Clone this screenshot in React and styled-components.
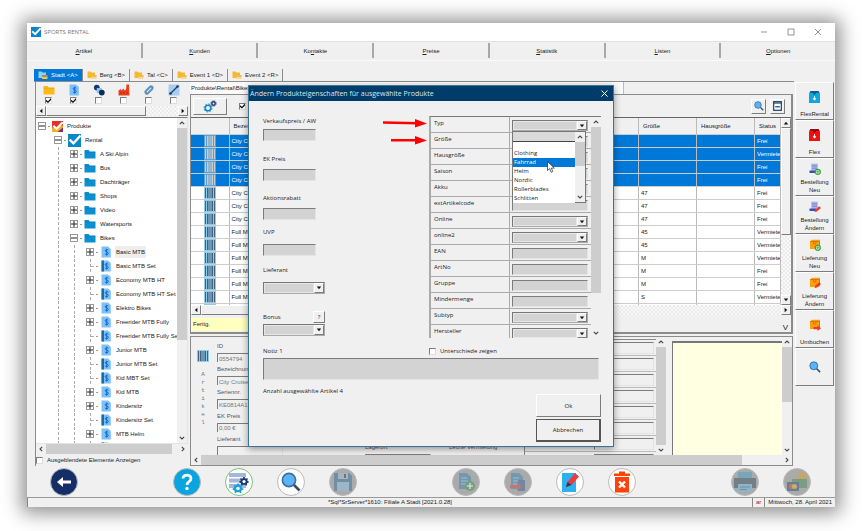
import React, { useState } from 'react';
import styled, { createGlobalStyle, css } from 'styled-components';

const GlobalStyle = createGlobalStyle`
  * {
    box-sizing: border-box;
  }

  body {
    margin: 0;
    background: white;
    color: #222;
    font-family: 'Liberation Sans', sans-serif;
    font-size: 6px;
    line-height: 8px;
  }

  button, input, select, textarea {
    margin: 0;
    padding: 0;
    border: 0;
    border-radius: 0;
    color: inherit;
    font: inherit;
  }

  svg {
    display: block;
    flex: none;
  }
`;

const sunken = css`
  border: 1px solid;
  border-color: #7d7d7d #e4e4e4 #e4e4e4 #7d7d7d;
`;

const raised = css`
  border: 1px solid;
  border-color: #fff #7d7d7d #7d7d7d #fff;
  background: #f0f0f0;
`;

const Page = styled.div`
  padding: 23px 29px 24px 27px;
`;

const AppWindow = styled.div`
  position: relative;
  background: #f0f0f0;
  box-shadow: 0 1px 18px 5px rgba(0, 0, 0, 0.45);
`;

/* ---------- title bar, menu, tabs ---------- */

const TitleBar = styled.header`
  display: flex;
  align-items: center;
  gap: 3px;
  height: 18px;
  padding: 0 9px 0 4px;
  background: white;
`;

const AppTitle = styled.h1`
  flex: 1;
  margin: 0;
  color: #777;
  font: 400 6px/10px 'Open Sans', sans-serif;
`;

const WindowButton = styled.button`
  width: 12px;
  margin-left: 12px;
  background: none;
  color: #888;
`;

const Menu = styled.nav`
  display: flex;
  height: 20px;
  padding: 1px 0 2px;
  border-top: 1px solid #e2e2e2;
  border-bottom: 1px solid #fafafa;
`;

const MenuButton = styled.button`
  flex: 1;
  border-right: 2px solid #a8a8a8;
  background: none;
  text-align: center;

  &:last-child {
    border-right: 0;
  }
`;

const Tabs = styled.div`
  display: flex;
  align-items: flex-end;
  height: 21px;
  margin: 0 41px 0 7px;
  border-bottom: 1px solid #8c8c8c;
`;

const Tab = styled.button`
  display: flex;
  align-items: center;
  gap: 3px;
  height: 12px;
  padding: 0 4px;
  border-right: 1px solid #8c8c8c;
  background: ${props => props.$active ? '#0078d7' : 'none'};
  color: ${props => props.$active ? 'white' : '#222'};
`;

/* ---------- shared controls ---------- */

const Checkbox = styled.input.attrs({ type: 'checkbox' })`
  appearance: none;
  flex: none;
  width: 7px;
  height: 7px;
  border: 1px solid;
  border-color: #7d7d7d #ddd #ddd #7d7d7d;
  background: white;

  &:checked::after {
    content: '';
    display: block;
    width: 5px;
    height: 5px;
    background: #111;
    clip-path: polygon(0 35%, 40% 65%, 100% 0, 100% 40%, 40% 100%, 0 70%);
  }
`;

const Bar = styled.div`
  display: flex;
  flex: none;
  flex-direction: ${props => props.$vertical ? 'column' : 'row'};
  ${props => props.$vertical ? 'width: 10px;' : 'height: 10px;'}
  background: ${props => props.$classic
    ? 'repeating-conic-gradient(#ececec 0 25%, #f8f8f8 0 50%) 0 0 / 4px 4px'
    : '#f0f0f0'};
`;

const BarArrow = styled.button`
  display: flex;
  flex: none;
  align-items: center;
  justify-content: center;
  width: 10px;
  height: 10px;
  background: none;
  color: #444;
  ${props => props.$classic && raised}
`;

const BarThumb = styled.div`
  flex: ${props => props.$size} 1 0;
  background: #cdcdcd;
  ${props => props.$classic && raised}
`;

const BarRest = styled.div`
  flex: ${props => props.$size} 1 0;
`;

const turns = { up: 0, right: 90, down: 180, left: 270 };

const Arrow = ({ to, solid }) => (
  <svg width="6" height="6" viewBox="0 0 6 6">
    <g transform={`rotate(${turns[to]} 3 3)`}>
      {solid
        ? <path d="M0.8 4.4 3 1.8 5.2 4.4Z" fill="#111" />
        : <path d="M0.8 4.2 3 2 5.2 4.2" fill="none" stroke="currentColor" strokeWidth="1.1" />}
    </g>
  </svg>
);

const ScrollBar = ({ vertical, classic, thumb, rest }) => (
  <Bar $vertical={vertical} $classic={classic}>
    <BarArrow $classic={classic} aria-label="Zurück">
      <Arrow to={vertical ? 'up' : 'left'} solid={classic} />
    </BarArrow>
    <BarThumb $size={thumb} $classic={classic} />
    <BarRest $size={rest} />
    <BarArrow $classic={classic} aria-label="Weiter">
      <Arrow to={vertical ? 'down' : 'right'} solid={classic} />
    </BarArrow>
  </Bar>
);

/* ---------- icons ---------- */

const LogoIcon = ({ size = 10, red }) => (
  <svg width={size} height={size} viewBox="0 0 12 12">
    <rect width="12" height="12" fill={red ? '#e3312d' : '#0a86c9'} />
    {red && <path d="M0 7 12 5V12H0Z" fill="#f5b324" />}
    {red && <path d="M6 12 12 7V12Z" fill="#7b2b83" />}
    <path d="M1.5 5.2 5 8.6 11.6 1.4" fill="none" stroke="white" strokeWidth="2.2" />
  </svg>
);

const FolderIcon = ({ color = '#0a8fd0', size = 12 }) => (
  <svg width={size} height={size} viewBox="0 0 12 12">
    <path d="M0.5 2H4.6L5.8 3.4H11.5V10.6H0.5Z" fill={color} />
    <path d="M0.5 4.2H11.5" stroke="rgba(0,0,0,0.15)" strokeWidth="0.6" />
  </svg>
);

const TabIcon = ({ active }) => (
  <svg width="10" height="10" viewBox="0 0 10 10">
    <path d="M0.5 1.5H3.5L4.5 2.6H8V8H0.5Z" fill={active ? '#8fd0f0' : '#f7b92c'} />
    <rect x="4" y="5" width="5.5" height="4" fill={active ? '#f3c64e' : '#fbd98a'} />
    <path d="M4 6H9.5" stroke={active ? '#264a77' : '#d98b14'} strokeWidth="0.8" />
  </svg>
);

const DocIcon = ({ set, size = 12 }) => (
  <svg width={size} height={size} viewBox="0 0 12 12">
    <path d="M1.5 0.5H8L10.8 3V11.5H1.5Z" fill="#7cc0f7" />
    {set && <path d="M1.5 0.5H4V11.5H1.5Z" fill="#1b6c9f" />}
    <path
      d="M8.3 4.3C7.8 3.3 5 3.4 5.2 4.9C5.4 6.2 8.3 5.9 8.3 7.5C8.2 9 5.4 9 4.9 7.8M6.7 2.7V9.6"
      fill="none"
      stroke="#0b62c4"
      strokeWidth="0.9"
    />
  </svg>
);

const BarcodeIcon = ({ light }) => (
  <svg width="12" height="12" viewBox="0 0 12 12">
    <rect width="12" height="12" fill={light ? '#5f9fd0' : '#8fcbe6'} />
    <path
      d="M1.5 1V11M3.5 1V11M5 1V11M7 1V11M8.5 1V11M10.5 1V11"
      stroke={light ? '#d4d4cf' : '#3b5672'}
      strokeWidth="0.9"
    />
  </svg>
);

const gear = 'M-0.9-5H0.9L1.3-3.5 2.6-2.9 3.9-3.7 5-2.5 4.1-1.2 4.5 0 6 0.5V2L4.3 2.4 3.5 3.6 4 5 2.6 5.8 1.5 4.7H-1.5L-2.6 5.8-4 5-3.5 3.6-4.3 2.4-6 2V0.5L-4.5 0-4.1-1.2-5-2.5-3.9-3.7-2.6-2.9-1.3-3.5Z';

const GearsIcon = () => (
  <svg width="14" height="13" viewBox="0 0 14 13">
    <circle cx="5" cy="8" r="2.8" fill="none" stroke="#1686c4" strokeWidth="1.6" />
    <circle cx="5" cy="8" r="4" fill="none" stroke="#1686c4" strokeWidth="1" strokeDasharray="1.6 1.5" />
    <circle cx="10.5" cy="3.5" r="1.7" fill="none" stroke="#1d3f74" strokeWidth="1.5" />
    <circle cx="10.5" cy="3.5" r="2.7" fill="none" stroke="#1d3f74" strokeWidth="0.9" strokeDasharray="1.2 0.9" />
  </svg>
);

const CirclesIcon = () => (
  <svg width="12" height="12" viewBox="0 0 12 12">
    <circle cx="3.8" cy="3.6" r="2.9" fill="#123a78" />
    <rect x="3.8" y="4" width="5" height="5" fill="#8cc3ee" />
    <circle cx="8.8" cy="8.6" r="2.9" fill="#0c2c5c" />
  </svg>
);

const FactoryIcon = () => (
  <svg width="12" height="12" viewBox="0 0 12 12">
    <path d="M0.5 11.5V6.5L3 5V6.5L6 4.5V6.5L8 5.5 8.5 0.5H11L11.5 11.5Z" fill="#e8401c" />
    <path d="M2 9H4M5 9H7M8.5 9H10" stroke="#b52c12" />
  </svg>
);

const LinkIcon = () => (
  <svg width="12" height="12" viewBox="0 0 12 12">
    <g transform="rotate(-45 6 6)">
      <rect x="0.5" y="3.5" width="11" height="5" rx="2.5" fill="#5d93bd" />
      <path d="M3 6H9" stroke="#d7e7f3" strokeWidth="1.2" />
    </g>
  </svg>
);

const LineIcon = () => (
  <svg width="12" height="12" viewBox="0 0 12 12">
    <rect x="0.5" y="0.5" width="11" height="11" fill="#a9cdea" />
    <path d="M2 10 10 2" stroke="#1d3f74" strokeWidth="1.2" />
    <circle cx="2.5" cy="9.5" r="1.3" fill="#1d3f74" />
    <circle cx="9.5" cy="2.5" r="1.3" fill="#1d3f74" />
  </svg>
);

const SearchIcon = ({ size = 10 }) => (
  <svg width={size} height={size} viewBox="0 0 20 20">
    <path d="M12.5 12.5 18.5 18.5" stroke="#3d4b5c" strokeWidth="2.6" />
    <circle cx="8" cy="8" r="6.6" fill="#5bb4f7" stroke="#3a6f9f" strokeWidth="1.6" />
  </svg>
);

const CollapseIcon = () => (
  <svg width="9" height="10" viewBox="0 0 9 10">
    <rect x="0.7" y="0.7" width="7.6" height="8.6" fill="white" stroke="#17406e" strokeWidth="1.2" />
    <path d="M0.7 2H8.3" stroke="#17406e" strokeWidth="1.2" />
    <path d="M2.2 5.8H6.8" stroke="#17406e" strokeWidth="1.2" />
  </svg>
);

const BoxDownIcon = ({ color, top }) => (
  <svg width="11" height="12" viewBox="0 0 11 12">
    <path d="M1.5 0H9.5L11 2.5V12H0V2.5Z" fill={color} />
    <path d="M1.5 0H9.5L10.5 1.8H7.5L5.5 4 3.5 1.8H0.5Z" fill={top} />
    <path d="M5.5 5V8M4.3 7.4 5.5 9.2 6.7 7.4Z" stroke="white" strokeWidth="0.9" fill="white" />
  </svg>
);

const marks = {
  plus: (
    <g>
      <circle cx="8.8" cy="8.8" r="2.5" fill="white" stroke="#3aa53f" strokeWidth="1.3" />
      <path d="M8.8 7.3V10.3M7.3 8.8H10.3" stroke="#3aa53f" strokeWidth="0.9" />
    </g>
  ),
  pen: <path d="M5.5 11 6.2 8.8 10 5.2 12 7 8 10.6Z" fill="#ee3b24" />,
  move: <path d="M4.5 8H8.5V6.2L12 9.2 8.5 12V10.2H4.5Z" fill="#ee3b24" />,
};

const OrderIcon = ({ mark }) => (
  <svg width="12" height="12" viewBox="0 0 12 12">
    <path d="M2 0.5H9V9H2Z" fill="#b8c4ee" />
    <path d="M3 2.3H8M3 4H8M3 5.7H8" stroke="#6578c8" strokeWidth="0.8" />
    <path d="M0.5 7.5H7V10H0.5Z" fill="#3a4fb0" />
    {marks[mark]}
  </svg>
);

const DeliveryIcon = ({ mark }) => (
  <svg width="12" height="12" viewBox="0 0 12 12">
    <path d="M1 2.5 3 0.8H11L9.8 2.5V10H1Z" fill="#ff9d0a" />
    <path d="M9.8 2.5 11 0.8V8.5L9.8 10Z" fill="#d97706" />
    <path d="M1 2.5H9.8M4.5 2.5V5H6.8V2.5" fill="none" stroke="#c96a00" strokeWidth="0.7" />
    {marks[mark]}
  </svg>
);

/* ---------- tree pane ---------- */

const Content = styled.main`
  display: flex;
  padding: 0 1px 0 8px;
`;

const TreePane = styled.aside`
  flex: none;
  width: 153px;
  border-left: 1px solid #8c8c8c;
`;

const FilterRow = styled.div`
  display: grid;
  grid-template-columns: repeat(6, 25px);
  height: 24px;
  padding-top: 2px;
`;

const Filter = styled.label`
  display: flex;
  flex-direction: column;
  align-items: center;
  gap: 1px;
`;

const TreeBox = styled.div`
  display: flex;
  height: 327px;
  margin-top: 1px;
  ${sunken}
  border-left: 0;
  background: white;
`;

const TreeList = styled.ul`
  flex: 1;
  margin: 0;
  padding: 1px 0 0 2px;
  overflow: hidden;
  list-style: none;
`;

const TreeItem = styled.li`
  display: flex;
  align-items: center;
  height: 14px;
  white-space: nowrap;
`;

const Guide = styled.span`
  flex: none;
  width: 16px;
  height: 14px;
  background: ${props => props.$line
    ? 'repeating-linear-gradient(#aaa 0 3px, transparent 3px 5px) 4px 0 / 1px 14px no-repeat'
    : 'none'};
`;

const Expander = styled.button`
  display: flex;
  flex: none;
  align-items: center;
  justify-content: center;
  width: 8px;
  height: 8px;
  border: 1px solid #999;
  background: white;
`;

const NoExpander = styled.span`
  flex: none;
  width: 8px;
  height: 14px;
  background:
    repeating-linear-gradient(#aaa 0 3px, transparent 3px 5px) 4px 0 / 1px 14px no-repeat,
    linear-gradient(#aaa, #aaa) 5px 7px / 3px 1px no-repeat;
`;

const Dash = styled.span`
  flex: none;
  width: 2px;
  height: 1px;
  margin: 0 2px;
  background: #999;
`;

const TreeLabel = styled.span`
  margin-left: 3px;
  padding: 2px 1px;
  background: ${props => props.$selected ? '#eee' : 'none'};
`;

const CheckLabel = styled.label`
  display: flex;
  align-items: center;
  gap: 4px;
  height: ${props => props.$height || 10}px;
`;

/* ---------- list pane ---------- */

const Center = styled.div`
  flex: 1;
  min-width: 0;
  margin-left: 2px;
`;

const PathTab = styled.div`
  width: 72%;
  height: 12px;
  padding: 2px 1px;
  border-right: 1px solid #bbb;
  background: #fafafa;
`;

const ListPane = styled.section`
  border: 1px solid #8c8c8c;
  border-width: 1px 2px 2px 1px;
`;

const ListTools = styled.div`
  display: flex;
  align-items: center;
  gap: 4px;
  height: 22px;
  padding: 0 6px 0 2px;
`;

const ToolButton = styled.button`
  display: flex;
  align-items: center;
  justify-content: center;
  width: ${props => props.$width}px;
  height: ${props => props.$height}px;
  ${raised}
`;

const FilterToggle = styled.label`
  display: flex;
  flex: 1;
  padding-left: 8px;
`;

const Grid = styled.div`
  display: flex;
  height: 188px;
  border-top: 1px solid #666;
`;

const GridClip = styled.div`
  flex: 1;
  overflow: hidden;
`;

const Table = styled.table`
  width: 100%;
  height: 197px;
  border-collapse: collapse;
  table-layout: fixed;

  th, td {
    padding: 0 2px;
    border-right: 1px solid #bbb;
    border-bottom: 1px solid #ccc;
    overflow: hidden;
    font-weight: 400;
    text-align: left;
    white-space: nowrap;
  }

  th {
    height: 16px;
    padding: 0 4px;
  }

  tbody {
    background: white;
  }
`;

const Row = styled.tr`
  background: ${props => props.$selected ? '#0078d7' : 'white'};
  color: ${props => props.$selected ? 'white' : '#222'};

  td:first-child {
    padding-left: 13px;
  }
`;

const ReadyRow = styled.div`
  display: flex;
  align-items: flex-end;
  justify-content: space-between;
  height: 16px;
  margin-top: 1px;
  padding-right: 3px;
  font-size: 8px;
`;

const Ready = styled.output`
  width: 40%;
  height: 13px;
  margin-bottom: 1px;
  padding: 2px;
  background: #ffffc0;
  font-size: 6px;
`;

/* ---------- detail pane ---------- */

const DetailPane = styled.section`
  margin-top: 2px;
  border: 1px solid #8c8c8c;
`;

const DetailBody = styled.div`
  display: flex;
  height: 118px;
  overflow: hidden;
`;

const ArticleMark = styled.div`
  display: flex;
  flex-direction: column;
  align-items: center;
  width: 26px;
  padding: 13px 2px 0 0;
  color: #777;
  font: 6px/8px 'Liberation Mono', monospace;

  svg {
    margin-bottom: 9px;
  }
`;

const DetailFields = styled.div`
  display: flex;
  flex: ${props => props.$grow || 0} 0 ${props => props.$width}px;
  flex-direction: column;
  justify-content: ${props => props.$bottom ? 'flex-end' : 'flex-start'};
  gap: 3px;
  padding-top: 5px;
  color: #555;
`;

const DetailField = styled.label`
  display: flex;
  flex-direction: column;
  gap: 3px;
  height: ${props => props.$cut ? 12 : 22}px;
  overflow: hidden;
`;

const DetailInput = styled.input`
  flex: none;
  width: 66px;
  height: 11px;
  padding: 0 1px;
  ${sunken}
  background: #f0f0f0;
  color: #777;
`;

const MiniProps = styled.div`
  width: 132px;
  height: 116px;
  margin-top: 2px;
  overflow: hidden;
  border-top: 1px solid #8c8c8c;
  border-left: 1px solid #8c8c8c;
`;

const MiniProp = styled.label`
  display: grid;
  grid-template-columns: 65px 1fr;
  height: 16px;
  padding: 2px 2px 2px 4px;
  border-bottom: 1px solid #bbb;

  input {
    width: 100%;
    height: 12px;
    ${sunken}
    background: #f0f0f0;
  }
`;

const NoteBox = styled.textarea`
  width: 110px;
  margin: 4px 0 0 6px;
  border: 1px solid #777;
  border-width: 2px 0 0 1px;
  background: #ffffe1;
  resize: none;
`;

/* ---------- sidebar ---------- */

const Sidebar = styled.nav`
  width: 39px;
  margin-left: 2px;
`;

const SideButton = styled.button`
  display: flex;
  flex-direction: column;
  align-items: center;
  width: 100%;
  height: 38px;
  padding: 0 3px 1px;
  ${raised}
`;

const SideIcon = styled.span`
  display: flex;
  flex: 1;
  align-items: center;
`;

/* ---------- bottom toolbar and status ---------- */

const Toolbar = styled.div`
  display: flex;
  justify-content: space-between;
  padding: 2px 24px 1px 23px;
`;

const ToolGroup = styled.div`
  display: flex;
  gap: 24px;
`;

const RoundButton = styled.button`
  display: flex;
  align-items: center;
  justify-content: center;
  width: 28px;
  height: 28px;
  border: 1px solid ${props => props.$ring || '#bbb'};
  border-radius: 50%;
  background: ${props => props.$color || 'white'};

  &:disabled {
    background: #aaa;
  }

  &:disabled svg {
    opacity: 0.45;
  }
`;

const StatusBar = styled.footer`
  display: flex;
  height: 10px;
  border-top: 1px solid #999;
`;

const StatusCell = styled.div`
  flex: ${props => props.$grow || 'none'};
  padding: 0 3px;
  border-left: 1px solid #888;
  color: ${props => props.$red ? '#b01010' : '#222'};
  text-align: center;
`;

/* ---------- dialog ---------- */

const Dialog = styled.section`
  position: absolute;
  top: 62px;
  left: 221px;
  width: 366px;
  border: 1px solid #3f7396;
  background: #f0f0f0;
  box-shadow: 0 2px 7px rgba(0, 0, 0, 0.4);
  font-family: 'Open Sans', sans-serif;
`;

const DialogTitle = styled.div`
  display: flex;
  align-items: center;
  justify-content: space-between;
  height: 15px;
  padding: 0 5px 0 1px;
  background: #003c69;
  color: #dbe6ee;

  h2 {
    margin: 0;
    font-size: 7px;
    font-weight: 400;
  }

  button {
    background: none;
  }
`;

const DialogBody = styled.form`
  padding: 15px 12px 4px 14px;
`;

const DialogColumns = styled.div`
  display: flex;
  justify-content: space-between;
`;

const FieldColumn = styled.div`
  display: grid;
  grid-template-rows: 25px 40px 39px 36px 38px 42px;
  width: 62px;
`;

const Field = styled.div`
  display: flex;
  flex-direction: column;
  justify-content: flex-end;
  gap: ${props => props.$gap}px;
`;

const FieldHead = styled.div`
  display: flex;
  align-items: center;
  justify-content: space-between;
  height: 10px;
  white-space: nowrap;
`;

const GrayInput = styled.input`
  width: ${props => props.$full ? '100%' : '53px'};
  height: ${props => props.$full ? 11 : 12}px;
  ${sunken}
  background: #d3d3d3;
`;

const SelectFrame = styled.div`
  display: flex;
  height: ${props => props.$height || 12}px;
  border: 1px solid;
  border-color: #777 #aaa #aaa #777;
  background: #d3d3d3;
`;

const PlainSelect = styled.select`
  appearance: none;
  flex: 1;
  min-width: 0;
  border: 1px solid #e6e6e6;
  background: #d3d3d3;
`;

const SelectArrow = styled.span`
  display: flex;
  align-items: center;
  justify-content: center;
  width: 10px;
  ${raised}
`;

const SelectBox = ({ id, height }) => (
  <SelectFrame $height={height}>
    <PlainSelect id={id} />
    <SelectArrow><Arrow to="down" solid /></SelectArrow>
  </SelectFrame>
);

const PropsBox = styled.div`
  display: flex;
  width: 172px;
  height: 222px;
  overflow: hidden;
  border-top: 1px solid #777;
  border-left: 2px solid #aaa;
`;

const PropRows = styled.div`
  position: relative;
  flex: 1;
`;

const PropRow = styled.div`
  display: grid;
  grid-template-columns: 79px 1fr;
  height: 16px;
  border-bottom: 1px solid #aaa;
`;

const PropLabel = styled.label`
  padding: 2px 3px;
  border-right: 1px solid #aaa;
`;

const PropValue = styled.div`
  padding: 3px 3px 1px 2px;
`;

const DropDown = styled.div`
  position: absolute;
  top: 14px;
  left: 81px;
  display: flex;
  width: 74px;
  height: 72px;
  border: 1px solid #777;
  background: white;
`;

const OptionList = styled.ul`
  flex: 1;
  margin: 0;
  padding: 0;
  list-style: none;

  &::before {
    content: '';
    display: block;
    height: 9px;
    margin-bottom: 7px;
    border-bottom: 1px solid #444;
    background: #dadada;
  }
`;

const Option = styled.li`
  height: 9px;
  padding-left: 1px;
  background: ${props => props.$active ? '#0078d7' : 'white'};
  color: ${props => props.$active ? 'white' : '#222'};
  line-height: 9px;
`;

const Pointer = styled.svg`
  position: absolute;
  top: 44px;
  left: 116px;
`;

const Hints = styled.svg`
  position: absolute;
  top: 31px;
  left: 133px;
`;

const Notes = styled.textarea`
  display: block;
  width: 336px;
  max-width: 100%;
  height: 22px;
  margin: 2px 0 7px;
  ${sunken}
  background: #d3d3d3;
  resize: none;
`;

const NotesHead = styled.div`
  display: grid;
  grid-template-columns: 166px 1fr;
  align-items: center;
  height: 10px;
  margin-top: 8px;
`;

const DialogFoot = styled.div`
  display: flex;
  align-items: flex-start;
  justify-content: space-between;
`;

const DialogActions = styled.div`
  display: grid;
  gap: 2px;
  width: 65px;
  padding-top: 7px;
`;

const DialogButton = styled.button`
  height: 23px;
  ${raised}
  ${props => props.$focus && 'border: 1px solid #555; border-width: 1px 2px 2px 1px;'}
`;

const QuestionButton = styled.button`
  width: 12px;
  height: 12px;
  ${raised}
`;

/* ---------- data ---------- */

const menu = [['', 'A', 'rtikel'], ['', 'K', 'unden'], ['Ko', 'n', 'takte'], ['', 'P', 'reise'], ['', 'S', 'tatistik'], ['', 'L', 'isten'], ['', 'O', 'ptionen']];

const tabs = ['Stadt <A>', 'Berg <B>', 'Tal <C>', 'Event 1 <D>', 'Event 2 <R>'];

const filters = [
  ['Ordner', <FolderIcon color="#fbb917" />, true],
  ['Artikel', <DocIcon />, true],
  ['Gruppen', <CirclesIcon />, false],
  ['Hersteller', <FactoryIcon />, false],
  ['Verknüpfung', <LinkIcon />, false],
  ['Linie', <LineIcon />, false],
];

const tree = [
  [0, 'Produkte', 'root', '-'],
  [1, 'Rental', 'logo', '-'],
  [2, 'A Ski Alpin', 'folder', '+'],
  [2, 'Bus', 'folder', '+'],
  [2, 'Dachträger', 'folder', '+'],
  [2, 'Shops', 'folder', '+'],
  [2, 'Video', 'folder', '+'],
  [2, 'Watersports', 'folder', '+'],
  [2, 'Bikes', 'folder', '-'],
  [3, 'Basic MTB', 'doc', '+'],
  [3, 'Basic MTB Set', 'set'],
  [3, 'Economy MTB HT', 'doc', '+'],
  [3, 'Economy MTB HT Set', 'set'],
  [3, 'Elektro Bikes', 'doc', '+'],
  [3, 'Freerider MTB Fully', 'doc', '+'],
  [3, 'Freerider MTB Fully Set', 'set'],
  [3, 'Junior MTB', 'doc', '+'],
  [3, 'Junior MTB Set', 'set'],
  [3, 'Kid MBT Set', 'set'],
  [3, 'Kid MTB', 'doc', '+'],
  [3, 'Kindersitz', 'doc', '+'],
  [3, 'Kindersitz Set', 'set'],
  [3, 'MTB Helm', 'doc', '+'],
  [3, 'MTB Helm Set', 'set'],
];

const treeIcons = {
  root: <LogoIcon size={11} red />,
  logo: <LogoIcon size={13} />,
  folder: <FolderIcon />,
  doc: <DocIcon />,
  set: <DocIcon set />,
};

const articles = [
  ['City Cruiser', '', 'Frei'],
  ['City Cruiser', '', 'Vermietet'],
  ['City Cruiser', '', 'Frei'],
  ['City Cruiser', '', 'Frei'],
  ['City Cruiser', '47', 'Frei'],
  ['City Cruiser', '47', 'Frei'],
  ['City Cruiser', '47', 'Frei'],
  ['Full MTB', '45', 'Vermietet'],
  ['Full MTB', '45', 'Vermietet'],
  ['Full MTB', 'M', 'Vermietet'],
  ['Full MTB', 'M', 'Frei'],
  ['Full MTB', 'M', 'Frei'],
  ['Full MTB', 'S', 'Vermietet'],
  ['Full MTB', 'S', 'Vermietet'],
];

const sideActions = [
  [<BoxDownIcon color="#12a5dc" top="#0b5f8c" />, 'FlexRental'],
  [<BoxDownIcon color="#ee1111" top="#8f0c0c" />, 'Flex'],
  [<OrderIcon mark="plus" />, 'Bestellung Neu'],
  [<OrderIcon mark="pen" />, 'Bestellung Ändern'],
  [<DeliveryIcon mark="plus" />, 'Lieferung Neu'],
  [<DeliveryIcon mark="pen" />, 'Lieferung Ändern'],
  [<DeliveryIcon mark="move" />, 'Umbuchen'],
  [<SearchIcon size={12} />, ''],
];

const properties = [
  ['Typ', true], ['Größe'], ['Hausgröße'], ['Saison'], ['Akku'], ['extArtikelcode'], ['Online', true],
  ['online2', true], ['EAN'], ['ArtNo'], ['Gruppe'], ['Mindermenge'], ['Subtyp', true], ['Hersteller', true],
];

const types = ['Clothing', 'Fahrrad', 'Helm', 'Nordic', 'Rollerblades', 'Schlitten'];

const SaveGlyph = () => (
  <svg width="20" height="20" viewBox="0 0 20 20">
    <path d="M1 1H16L19 4V19H1Z" fill="#2a6f9e" />
    <rect x="5" y="1" width="10" height="6" fill="#9fc3da" />
    <rect x="11" y="2" width="2" height="4" fill="#234" />
    <rect x="4" y="10" width="12" height="9" fill="#8fc4e4" />
  </svg>
);

const PageGlyph = ({ children }) => (
  <svg width="20" height="20" viewBox="0 0 20 20">
    <path d="M3 1H11L15 5V17H3Z" fill="#2e86bd" />
    <path d="M5 6H11M5 9H12M5 12H12" stroke="#a6cbe2" />
    {children}
  </svg>
);

const ArticleTree = () => {
  const [selected, setSelected] = useState('Basic MTB');

  return (
    <TreeBox>
      <TreeList>
        {tree.map(([level, name, icon, sign]) => (
          <TreeItem key={name} onClick={() => setSelected(name)}>
            {Array.from({ length: level }, (_, i) => <Guide key={i} $line={i > 0} />)}
            {sign ? (
              <Expander aria-label={name}>
                <svg width="6" height="6" viewBox="0 0 6 6">
                  <path d={sign === '+' ? 'M0 3H6M3 0V6' : 'M0 3H6'} stroke="#222" />
                </svg>
              </Expander>
            ) : <NoExpander />}
            <Dash />
            {treeIcons[icon]}
            <TreeLabel $selected={selected === name}>{name}</TreeLabel>
          </TreeItem>
        ))}
      </TreeList>
      <ScrollBar vertical thumb={213} rest={93} />
    </TreeBox>
  );
};

const ArticleTable = () => (
  <Grid>
    <GridClip>
      <Table>
        <colgroup>
          <col style={{ width: 38 }} />
          <col />
          <col style={{ width: 58 }} />
          <col style={{ width: 58 }} />
          <col style={{ width: 26 }} />
        </colgroup>
        <thead>
          <tr>
            <th />
            <th>Bezeichnung</th>
            <th>Größe</th>
            <th>Hausgröße</th>
            <th>Status</th>
          </tr>
        </thead>
        <tbody>
          {articles.map(([name, size, status], i) => (
            <Row key={i} $selected={i < 4}>
              <td><BarcodeIcon light={i < 4} /></td>
              <td>{name}</td>
              <td>{size}</td>
              <td />
              <td>{status}</td>
            </Row>
          ))}
        </tbody>
      </Table>
    </GridClip>
    <ScrollBar vertical classic thumb={106} rest={61} />
  </Grid>
);

const Details = () => (
  <DetailPane>
    <DetailBody>
      <ArticleMark>
        <BarcodeIcon />
        {'Artikel'.split('').map((letter, i) => <span key={i}>{letter}</span>)}
      </ArticleMark>
      <DetailFields $width={148}>
        {[['ID', '0554794'], ['Bezeichnung', 'City Cruiser'], ['Seriennr.', 'KE0814A1'], ['EK Preis', '0,00 €'], ['Lieferant', '']].map(([label, value]) => (
          <DetailField key={label}>
            {label}
            <DetailInput readOnly value={value} />
          </DetailField>
        ))}
      </DetailFields>
      <DetailFields $width={84} $bottom>
        <DetailField $cut>Lagerort<DetailInput readOnly /></DetailField>
      </DetailFields>
      <DetailFields $width={74} $grow={1} $bottom>
        <DetailField $cut>Letzte Vermietung</DetailField>
      </DetailFields>
      <MiniProps>
        {['Typ', 'Größe', 'Hausgröße', 'Saison', 'Akku', 'Online', 'EAN', 'online2'].map(label => (
          <MiniProp key={label}>{label}<input readOnly /></MiniProp>
        ))}
      </MiniProps>
      <ScrollBar vertical thumb={200} rest={1} />
      <NoteBox aria-label="Bemerkung" />
      <ScrollBar vertical thumb={57} rest={45} />
    </DetailBody>
    <ScrollBar thumb={540} rest={40} />
  </DetailPane>
);

const ProductDialog = () => (
  <Dialog role="dialog" aria-labelledby="dialog-title">
    <DialogTitle>
      <h2 id="dialog-title">Ändern Produkteigenschaften für ausgewählte Produkte</h2>
      <button aria-label="Schließen">
        <svg width="7" height="7" viewBox="0 0 7 7">
          <path d="M0.5 0.5 6.5 6.5M6.5 0.5 0.5 6.5" stroke="white" />
        </svg>
      </button>
    </DialogTitle>
    <DialogBody onSubmit={(e) => e.preventDefault()}>
      <DialogColumns>
        <FieldColumn>
          {[['Verkaufspreis / AW', 3], ['EK Preis', 5], ['Aktionsrabatt', 5], ['UVP', 7]].map(([label, gap]) => (
            <Field key={label} $gap={gap}>
              <FieldHead><label htmlFor={label}>{label}</label></FieldHead>
              <GrayInput id={label} />
            </Field>
          ))}
          <Field $gap={7}>
            <FieldHead><label htmlFor="lieferant">Lieferant</label></FieldHead>
            <SelectBox id="lieferant" />
          </Field>
          <Field $gap={2}>
            <FieldHead>
              <label htmlFor="bonus">Bonus</label>
              <QuestionButton type="button">?</QuestionButton>
            </FieldHead>
            <SelectBox id="bonus" />
          </Field>
        </FieldColumn>
        <PropsBox>
          <PropRows>
            {properties.map(([label, select]) => (
              <PropRow key={label}>
                <PropLabel htmlFor={`prop-${label}`}>{label}</PropLabel>
                <PropValue>
                  {select
                    ? <SelectBox id={`prop-${label}`} height={11} />
                    : <GrayInput id={`prop-${label}`} $full />}
                </PropValue>
              </PropRow>
            ))}
            <DropDown>
              <OptionList role="listbox" aria-label="Typ">
                {types.map(type => (
                  <Option key={type} role="option" $active={type === 'Fahrrad'}>{type}</Option>
                ))}
              </OptionList>
              <ScrollBar vertical thumb={24} rest={26} />
            </DropDown>
            <Pointer width="8" height="12" viewBox="0 0 8 12">
              <path d="M0.5 0.5V9.5L2.7 7.6 4.2 11.3 5.8 10.6 4.3 7.1H7.3Z" fill="white" stroke="#222" strokeWidth="0.7" />
            </Pointer>
          </PropRows>
          <ScrollBar vertical thumb={167} rest={35} />
        </PropsBox>
      </DialogColumns>
      <Hints width="46" height="28" viewBox="0 0 46 28">
        <path d="M1 5.5 36 6.2M9 23.2H36" stroke="#f00" strokeWidth="2.4" />
        <path d="M33 2 45 6.400 33 10.500ZM33 19 45 23.400 33 27.500Z" fill="#f00" />
      </Hints>
      <NotesHead>
        <label htmlFor="notiz">Notiz 1</label>
        <CheckLabel><Checkbox />Unterschiede zeigen</CheckLabel>
      </NotesHead>
      <Notes id="notiz" />
      <DialogFoot>
        <span>Anzahl ausgewählte Artikel 4</span>
        <DialogActions>
          <DialogButton type="submit">Ok</DialogButton>
          <DialogButton type="button" $focus>Abbrechen</DialogButton>
        </DialogActions>
      </DialogFoot>
    </DialogBody>
  </Dialog>
);

const BottomTools = () => (
  <Toolbar>
    <ToolGroup>
      <RoundButton $color="#142f68" aria-label="Zurück">
        <svg width="16" height="14" viewBox="0 0 16 14">
          <path d="M1 7 7 2V5.500H15V8.500H7V12Z" fill="white" />
        </svg>
      </RoundButton>
    </ToolGroup>
    <ToolGroup>
      <RoundButton $color="#0aa5de" aria-label="Hilfe">
        <svg width="12" height="18" viewBox="0 0 12 18">
          <path d="M2 5.5C2 0.8 10 1 10 5.5C10 8.5 6 8.5 6 12" fill="none" stroke="white" strokeWidth="2.7" />
          <circle cx="6" cy="15.5" r="1.7" fill="white" />
        </svg>
      </RoundButton>
      <RoundButton $ring="#7cc47c" aria-label="Einstellungen">
        <svg width="22" height="24" viewBox="0 0 22 24">
          <path d="M1 3H18V7H1ZM1 8.5H18V12.5H1ZM1 14H18V18H1Z" fill="#a5b8d8" />
          <path d={gear} transform="translate(16 11) scale(0.8)" fill="#173a75" />
          <circle cx="16" cy="11.5" r="1.6" fill="white" />
          <path d={gear} transform="translate(10 18) scale(0.9)" fill="#19a0dc" />
          <circle cx="10" cy="18.5" r="1.8" fill="white" />
        </svg>
      </RoundButton>
      <RoundButton aria-label="Suchen"><SearchIcon size={20} /></RoundButton>
      <RoundButton disabled aria-label="Speichern"><SaveGlyph /></RoundButton>
    </ToolGroup>
    <ToolGroup>
      <RoundButton disabled aria-label="Neu">
        <PageGlyph>
          <circle cx="14" cy="14" r="5" fill="#2f9a3c" />
          <path d="M14 11V17M11 14H17" stroke="white" strokeWidth="1.6" />
        </PageGlyph>
      </RoundButton>
      <RoundButton disabled aria-label="Kopieren">
        <PageGlyph>
          <path d="M10 8H17V19H10Z" fill="#2b5f9a" />
          <path d="M2 13H9V10L14 14.5 9 18.5V16H2Z" fill="#e03a2c" />
        </PageGlyph>
      </RoundButton>
      <RoundButton aria-label="Bearbeiten">
        <svg width="20" height="22" viewBox="0 0 20 22">
          <path d="M2 2H16V21H2Z" fill="#2fb0ee" />
          <path d="M6 16 7.5 11 15 2 19 5.5 11.5 14Z" fill="#ee3b38" />
          <path d="M6 16 7.5 11 11.5 14Z" fill="#173a75" />
        </svg>
      </RoundButton>
      <RoundButton aria-label="Löschen">
        <svg width="18" height="22" viewBox="0 0 18 22">
          <path d="M1 2.5H6V0.5H12V2.5H17V5H1ZM2 6H16V21.5H2Z" fill="#ff4208" />
          <path d="M6 10.5 12 16.5M12 10.5 6 16.5" stroke="white" strokeWidth="2.4" />
        </svg>
      </RoundButton>
    </ToolGroup>
    <ToolGroup>
      <RoundButton disabled aria-label="Drucken">
        <svg width="24" height="22" viewBox="0 0 24 22">
          <path d="M5 1H19V7H5Z" fill="#3f9fd0" />
          <path d="M1 7H23V17H1Z" fill="#34495c" />
          <path d="M5 13H19V21H5Z" fill="#6fc0ea" />
          <path d="M7 16H17M7 18.5H14" stroke="#2d6f9a" />
        </svg>
      </RoundButton>
      <RoundButton disabled aria-label="Bezahlen">
        <svg width="24" height="22" viewBox="0 0 24 22">
          <circle cx="17" cy="6" r="5" fill="#e0a526" />
          <path d="M7 8H22V17H7Z" fill="#3e8f56" />
          <path d="M2 11H14V20H2Z" fill="#1d4777" />
          <circle cx="6.5" cy="15.5" r="2.5" fill="#e8401c" />
          <circle cx="9.5" cy="15.5" r="2.5" fill="#f3b324" />
        </svg>
      </RoundButton>
    </ToolGroup>
  </Toolbar>
);

const App = () => {
  const [activeTab, setActiveTab] = useState(tabs[0]);

  return (
    <Page>
      <GlobalStyle />
      <AppWindow>
        <TitleBar>
          <LogoIcon />
          <AppTitle>SPORTS RENTAL</AppTitle>
          {[['Minimieren', 'M1 4H7'], ['Maximieren', 'M1 1H7V7H1Z'], ['Schließen', 'M1 1 7 7M7 1 1 7']].map(([label, d]) => (
            <WindowButton key={label} aria-label={label}>
              <svg width="8" height="8" viewBox="0 0 8 8">
                <path d={d} fill="none" stroke="currentColor" strokeWidth="0.9" />
              </svg>
            </WindowButton>
          ))}
        </TitleBar>
        <Menu>
          {menu.map(([before, key, after]) => (
            <MenuButton key={after}>{before}<u>{key}</u>{after}</MenuButton>
          ))}
        </Menu>
        <Tabs role="tablist">
          {tabs.map(tab => (
            <Tab key={tab} role="tab" $active={tab === activeTab} onClick={() => setActiveTab(tab)}>
              <TabIcon active={tab === activeTab} />
              {tab}
            </Tab>
          ))}
        </Tabs>
        <Content>
          <TreePane>
            <FilterRow>
              {filters.map(([label, icon, checked]) => (
                <Filter key={label}>
                  {icon}
                  <Checkbox defaultChecked={checked} aria-label={label} />
                </Filter>
              ))}
            </FilterRow>
            <ScrollBar classic thumb={98} rest={32} />
            <ArticleTree />
            <ScrollBar thumb={117} rest={6} />
            <CheckLabel $height={12}><Checkbox />Ausgeblendete Elemente Anzeigen</CheckLabel>
          </TreePane>
          <Center>
            <PathTab>Produkte\Rental\Bikes\Basic MTB</PathTab>
            <ListPane>
              <ListTools>
                <ToolButton $width={34} $height={17} aria-label="Optionen"><GearsIcon /></ToolButton>
                <FilterToggle><Checkbox defaultChecked aria-label="Filter aktiv" /></FilterToggle>
                <ToolButton $width={15} $height={15} aria-label="Suchen"><SearchIcon /></ToolButton>
                <ToolButton $width={15} $height={15} aria-label="Spaltenbreite"><CollapseIcon /></ToolButton>
              </ListTools>
              <ArticleTable />
              <ScrollBar classic thumb={300} rest={270} />
              <ReadyRow>
                <Ready>Fertig.</Ready>
                V
              </ReadyRow>
            </ListPane>
            <Details />
          </Center>
          <Sidebar>
            {sideActions.map(([icon, label], i) => (
              <SideButton key={i} aria-label={label || 'Suchen'}>
                <SideIcon>{icon}</SideIcon>
                {label}
              </SideButton>
            ))}
          </Sidebar>
        </Content>
        <BottomTools />
        <StatusBar>
          <StatusCell $grow={1}>*Sql*SrServer*1610: Filiale A Stadt [2021.0.28]</StatusCell>
          <StatusCell $red>ar</StatusCell>
          <StatusCell>Mittwoch, 28. April 2021</StatusCell>
        </StatusBar>
        <ProductDialog />
      </AppWindow>
    </Page>
  );
};

export default App;
